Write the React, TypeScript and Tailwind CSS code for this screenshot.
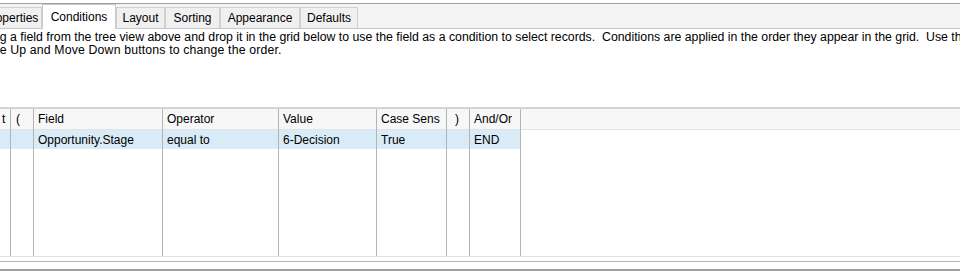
import React from "react";

const tabs = [
  { label: "Properties", w: "w-[62px]", sel: false },
  { label: "Conditions", w: "w-[74px]", sel: true },
  { label: "Layout", w: "w-[49px]", sel: false },
  { label: "Sorting", w: "w-[55px]", sel: false },
  { label: "Appearance", w: "w-[80px]", sel: false },
  { label: "Defaults", w: "w-[58px]", sel: false },
];

const cols = [
  { h: "t", d: "", w: "w-[11px]", pad: "pl-[2px]" },
  { h: "(", d: "", w: "w-[23px]", pad: "pl-[5px]" },
  { h: "Field", d: "Opportunity.Stage", w: "w-[129px]", pad: "pl-[4px]" },
  { h: "Operator", d: "equal to", w: "w-[116px]", pad: "pl-[4px]" },
  { h: "Value", d: "6-Decision", w: "w-[98px]", pad: "pl-[4px]" },
  { h: "Case Sens", d: "True", w: "w-[70px]", pad: "pl-[4px]" },
  { h: ")", d: "", w: "w-[23px]", pad: "pl-[8px]" },
  { h: "And/Or", d: "END", w: "w-[51px]", pad: "pl-[4px]" },
];

export default function App() {
  return (
    <div
      className="w-[960px] h-[277px] bg-white overflow-hidden text-[12px] text-black"
      style={{ fontFamily: '"Liberation Sans", Arial, sans-serif' }}
    >
      <div className="h-[3px] bg-white" />
      <div className="h-px bg-[#a0a0a0]" />
      {/* tab strip */}
      <div className="h-[25px] bg-[#f4f4f4] border-b border-[#c4c8d0] flex items-end">
        <div className="flex items-end ml-[-20px] h-full">
          {tabs.map((t) =>
            t.sel ? (
              <div
                key={t.label}
                className={`${t.w} h-[25px] -mb-px bg-white border-x border-t border-[#c8c8c8] flex items-start justify-center pt-[3px] relative z-10`}
              >
                {t.label}
              </div>
            ) : (
              <div
                key={t.label}
                className={`${t.w} h-[21px] bg-[#f0f0f0] border-x border-t border-[#d0d0d0] flex items-center justify-center`}
              >
                {t.label}
              </div>
            )
          )}
        </div>
      </div>
      {/* description */}
      <div className="pt-[2px] leading-[13px] whitespace-pre text-[12.3px]">
        <div className="ml-[-20px]">
          {"Drag a field from the tree view above and drop it in the grid below to use the field as a condition to select records.  Conditions are applied in the order they appear in the grid.  Use the"}
        </div>
        <div className="ml-[-24px] tracking-[0.15px]">
          {"Move Up and Move Down buttons to change the order."}
        </div>
      </div>
      {/* grid */}
      <div className="mt-[50px] border-t-2 border-[#d4d4d4] flex h-[150px] border-b border-b-[#e0e0e0]">
        {cols.map((c, i) => (
          <div key={i} className={`${c.w} shrink-0 flex flex-col border-r border-[#b4b4b4]`}>
            <div
              className={`h-[21px] bg-[#f7f7f7] border-b border-[#e2e2e2] flex items-center ${c.pad} whitespace-nowrap overflow-hidden`}
            >
              {c.h}
            </div>
            <div className={`h-[19px] bg-[#d9ebf7] flex items-center ${c.pad} whitespace-nowrap overflow-hidden`}>
              {c.d}
            </div>
            <div className="flex-1 bg-white" />
          </div>
        ))}
        <div className="flex-1 flex flex-col">
          <div className="h-[21px] bg-[#f7f7f7] border-b border-[#e2e2e2]" />
          <div className="flex-1 bg-white" />
        </div>
      </div>
      <div className="h-[4px]" />
      <div className="h-px bg-[#b4b4bc]" />
      <div className="h-[7px]" />
      <div className="h-[2px] bg-[#a0a0a0]" />
    </div>
  );
}
